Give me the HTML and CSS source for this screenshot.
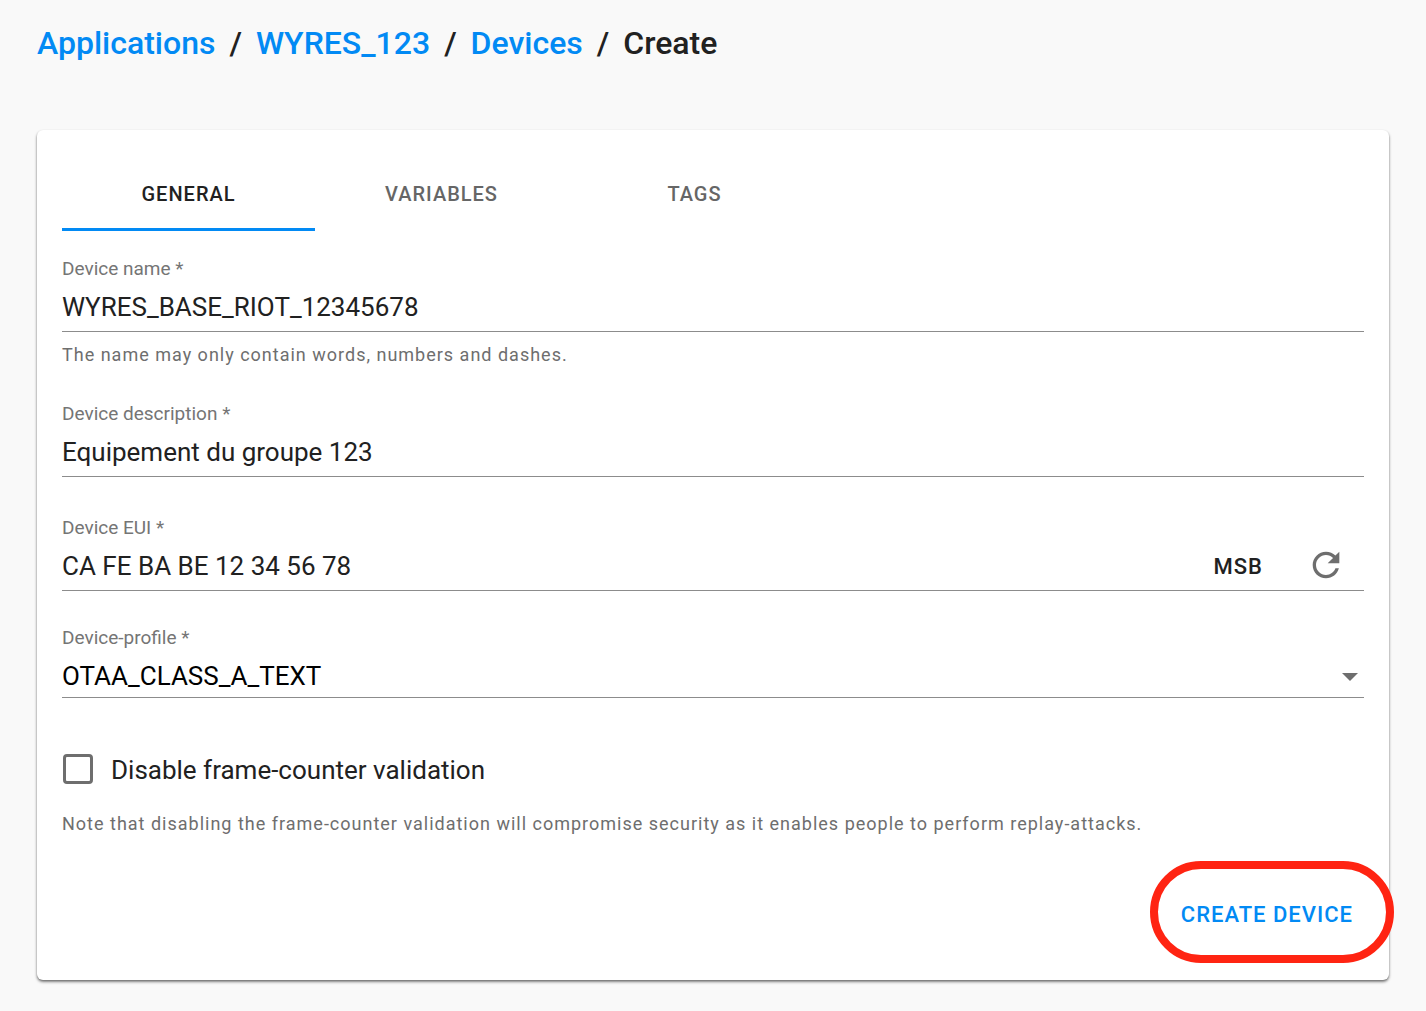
FILE: index.html
```html
<!DOCTYPE html>
<html lang="en">
<head>
<meta charset="utf-8">
<title>Create device</title>
<link rel="stylesheet" href="styles.css">
</head>
<body>
<nav class="breadcrumb" aria-label="Breadcrumb">
  <a href="#applications">Applications</a><span class="slash">/</span><a href="#application">WYRES_123</a><span class="slash">/</span><a href="#devices">Devices</a><span class="slash">/</span><span aria-current="page">Create</span>
</nav>
<main class="card">
  <div class="tabs" role="tablist">
    <button class="tab tab-active" type="button" role="tab" aria-selected="true">GENERAL</button>
    <button class="tab" type="button" role="tab" aria-selected="false">VARIABLES</button>
    <button class="tab" type="button" role="tab" aria-selected="false">TAGS</button>
  </div>
  <form class="form">
    <div class="field field-name">
      <label for="name">Device name *</label>
      <input class="control" id="name" type="text" value="WYRES_BASE_RIOT_12345678">
      <p class="help">The name may only contain words, numbers and dashes.</p>
    </div>
    <div class="field field-description">
      <label for="description">Device description *</label>
      <input class="control" id="description" type="text" value="Equipement du groupe 123">
    </div>
    <div class="field field-eui">
      <label for="eui">Device EUI *</label>
      <div class="control-row">
        <input class="control" id="eui" type="text" value="CA FE BA BE 12 34 56 78">
        <button class="msb" type="button">MSB</button>
        <button class="refresh" type="button" aria-label="Generate random ID">
          <svg viewBox="0 0 24 24" aria-hidden="true"><path d="M17.65 6.35C16.2 4.9 14.21 4 12 4c-4.42 0-7.99 3.58-7.99 8s3.57 8 7.99 8c3.73 0 6.84-2.55 7.73-6h-2.08c-.82 2.33-3.04 4-5.65 4-3.31 0-6-2.69-6-6s2.69-6 6-6c1.66 0 3.14.69 4.22 1.78L13 11h7V4l-2.35 2.35z"/></svg>
        </button>
      </div>
    </div>
    <div class="field">
      <label for="profile">Device-profile *</label>
      <div class="select-wrap">
        <select class="control select" id="profile"><option>OTAA_CLASS_A_TEXT</option></select>
        <svg class="arrow" viewBox="0 0 16 8" aria-hidden="true"><path d="M0 0h16L8 8z"/></svg>
      </div>
    </div>
    <label class="check"><input type="checkbox">Disable frame-counter validation</label>
    <p class="help note">Note that disabling the frame-counter validation will compromise security as it enables people to perform replay-attacks.</p>
    <div class="actions">
      <button class="create" type="button">CREATE DEVICE
        <svg class="ring" viewBox="0 0 244 102" aria-hidden="true"><rect x="4" y="4" width="236" height="94" rx="47"/></svg>
      </button>
    </div>
  </form>
</main>
</body>
</html>
```
FILE: styles.css
```css
* { box-sizing: border-box; }
body {
  margin: 0;
  padding: 24px 37px 30px;
  background: #f9f9f9;
  color: #212121;
  font-family: Roboto, "Liberation Sans", sans-serif;
}
button, input, select { font: inherit; color: inherit; }
button { border: 0; background: none; padding: 0; cursor: pointer; }
p { margin: 0; }
.breadcrumb {
  font-size: 32px;
  line-height: 38px;
  font-weight: 500;
}
.breadcrumb a { color: #028af4; text-decoration: none; }
.slash { margin: 0 14px; }
.card {
  margin-top: 68px;
  padding: 25px 25px 40px;
  background: #fff;
  border-radius: 6px;
  box-shadow: 0 2px 3px rgba(0, 0, 0, .45), 0 1px 2px rgba(0, 0, 0, .2);
}
.tabs { display: grid; grid-template-columns: repeat(3, 253px); }
.tab {
  height: 76px;
  padding-top: 5px;
  border-bottom: 3px solid transparent;
  font-size: 20px;
  font-weight: 500;
  letter-spacing: 1px;
  color: #666;
}
.tab-active { color: #212121; border-color: #028af4; }
.form { display: flex; flex-direction: column; padding-top: 26px; }
.field { display: flex; flex-direction: column; }
.field label { font-size: 19px; line-height: 24px; color: #757575; }
.control {
  width: 100%;
  height: 51px;
  padding: 1px 0 0;
  border: 0;
  border-bottom: 1px solid #8c8c8c;
  border-radius: 0;
  outline: 0;
  background: none;
  font-size: 26px;
}
.field-name { margin-bottom: 35px; }
.field-description { margin-bottom: 39px; }
.field-eui { margin-bottom: 35px; }
.help { font-size: 18px; line-height: 24px; letter-spacing: 1px; color: #6e6e6e; }
.field .help { margin-top: 11px; }
.control-row { display: flex; border-bottom: 1px solid #8c8c8c; }
.control-row .control { flex: 1; border: 0; height: 50px; }
.msb { margin-right: 43px; padding-top: 2px; font-size: 22px; font-weight: 500; letter-spacing: 1px; }
.refresh { width: 40px; margin-right: 18px; }
.refresh svg { display: block; width: 40px; height: 40px; fill: #6e6e6e; }
.select-wrap { position: relative; }
.select { display: block; appearance: none; height: 48px; padding-top: 4px; color: #000; }
.arrow { position: absolute; right: 6px; top: 23px; width: 16px; height: 8px; fill: #6e6e6e; }
.check {
  display: flex;
  align-items: center;
  gap: 18px;
  margin-top: 56px;
  font-size: 26px;
  line-height: 32px;
}
.check input {
  appearance: none;
  width: 30px;
  height: 30px;
  margin: 0 0 2px 1px;
  border: 3px solid #6e6e6e;
  border-radius: 4px;
}
.note { margin-top: 26px; }
.actions { display: flex; justify-content: flex-end; margin-top: 52px; padding-right: 11px; }
.create {
  position: relative;
  height: 52px;
  color: #028af4;
  font-size: 22px;
  font-weight: 500;
  letter-spacing: 1px;
}
/* The ring runs past the button and over the card's right edge. */
.ring {
  position: absolute;
  right: -41px;
  top: -27px;
  width: 244px;
  height: 102px;
  fill: none;
  stroke: #ff2412;
  stroke-width: 8;
  pointer-events: none;
}
```
